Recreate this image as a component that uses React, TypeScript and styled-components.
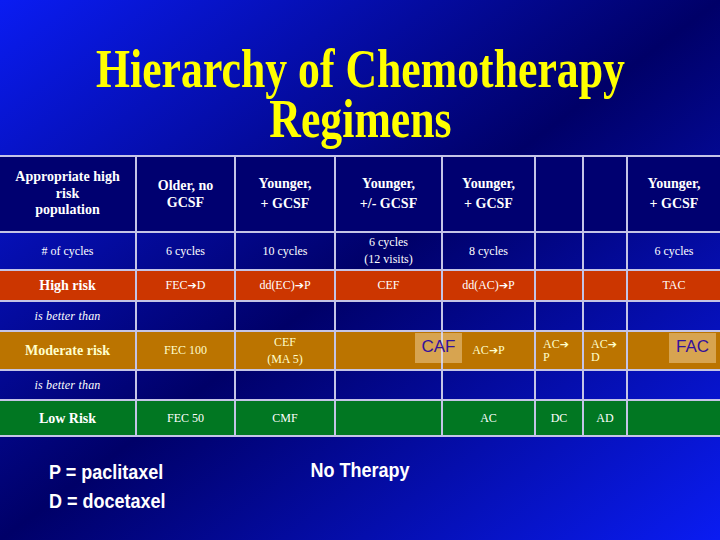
import React from "react";
import styled, { createGlobalStyle, css } from "styled-components";

const GlobalStyle = createGlobalStyle`
  html, body { margin: 0; padding: 0; background: #000068; }
  #root { width: 720px; height: 540px; }
`;

const Slide = styled.div`
  width: 720px;
  height: 540px;
  overflow: hidden;
  display: flex;
  flex-direction: column;
  background: linear-gradient(to bottom right, #0a1cf2 0%, #000068 50%, #0a1cf2 100%);
  font-family: "Liberation Serif", "Times New Roman", serif;
`;

const Title = styled.h1`
  margin: 0;
  padding-top: 44px;
  height: 100px;
  display: flex;
  flex-direction: column;
  align-items: center;
  font-family: "Liberation Serif", "Times New Roman", serif;
  font-weight: bold;
  font-size: 54px;
  color: #ffff00;
`;

const TitleLine = styled.span`
  display: block;
  height: 50px;
  line-height: 50px;
  transform: scaleX(0.81);
  white-space: nowrap;
`;

const Grid = styled.table`
  margin-top: 11px;
  margin-left: -2px;
  width: 722px;
  border-collapse: collapse;
  table-layout: fixed;
`;

const Col = styled.col<{ $w: number }>`
  width: ${(p) => p.$w}px;
`;

type Tone = "header" | "clear" | "red" | "orange" | "green";

const toneFill: Record<Tone, string> = {
  header: "#000070",
  clear: "transparent",
  red: "#cc3600",
  orange: "#bb7400",
  green: "#017722",
};

const Row = styled.tr<{ $tone: Tone; $h: number }>`
  height: ${(p) => p.$h}px;
  background: ${(p) => toneFill[p.$tone]};
  color: ${(p) => (p.$tone === "orange" ? "#ffffcc" : "#ffffff")};
`;

const Cell = styled.td<{ $kind?: "head" | "label" | "note" | "data"; $lh?: number; $left?: boolean }>`
  position: relative;
  border: 2px solid #c4c4e6;
  padding: 0 6px;
  vertical-align: middle;
  text-align: ${(p) => (p.$left ? "left" : "center")};
  font-size: 12px;
  line-height: ${(p) => p.$lh ?? 17}px;
  overflow: visible;
  ${(p) =>
    p.$kind === "head" &&
    css`
      font-size: 14px;
      font-weight: bold;
    `}
  ${(p) =>
    p.$kind === "label" &&
    css`
      font-size: 14px;
      font-weight: bold;
    `}
  ${(p) =>
    p.$kind === "note" &&
    css`
      font-style: italic;
      letter-spacing: 0.2px;
    `}
  ${(p) =>
    p.$left &&
    css`
      padding-left: 7px;
    `}
`;

const Arrow = styled.span`
  font-family: "DejaVu Sans", sans-serif;
  font-size: 11px;
  font-weight: bold;
`;

const Badge = styled.span<{ $right: number }>`
  position: absolute;
  top: 1px;
  right: ${(p) => p.$right}px;
  width: 47px;
  height: 30px;
  display: flex;
  align-items: center;
  justify-content: center;
  background: rgba(255, 232, 190, 0.42);
  color: #33119a;
  font-family: "Liberation Sans", Arial, sans-serif;
  font-size: 17px;
  line-height: 1;
  padding-bottom: 4px;
  box-sizing: border-box;
`;

const Footer = styled.div`
  flex: 1;
  display: grid;
  grid-template-columns: 1fr auto 1fr;
  font-family: "Liberation Sans", Arial, sans-serif;
  font-weight: bold;
  color: #ffffff;
`;

const Legend = styled.div`
  padding-top: 23px;
  padding-left: 49px;
  display: flex;
  flex-direction: column;
  gap: 5px;
`;

const Line = styled.div`
  font-size: 20px;
  line-height: 24px;
  transform: scaleX(0.9);
  transform-origin: 0 50%;
  white-space: nowrap;
`;

const Center = styled.div`
  padding-top: 21px;
  font-size: 20px;
  line-height: 24px;
  transform: scaleX(0.9);
  white-space: nowrap;
`;

const A = () => <Arrow>➔</Arrow>;

const widths = [137, 99, 100, 107, 93, 48, 44, 94];

export default function App() {
  return (
    <Slide>
      <GlobalStyle />
      <Title>
        <TitleLine>Hierarchy of Chemotherapy</TitleLine>
        <TitleLine>Regimens</TitleLine>
      </Title>
      <Grid>
        <colgroup>
          {widths.map((w, i) => (
            <Col key={i} $w={w} />
          ))}
        </colgroup>
        <tbody>
          <Row $tone="header" $h={76}>
            <Cell $kind="head" $lh={16.5}>
              Appropriate high
              <br />
              risk
              <br />
              population
            </Cell>
            <Cell $kind="head" $lh={17}>
              Older, no
              <br />
              GCSF
            </Cell>
            <Cell $kind="head" $lh={20}>
              Younger,
              <br />+ GCSF
            </Cell>
            <Cell $kind="head" $lh={20}>
              Younger,
              <br />
              +/- GCSF
            </Cell>
            <Cell $kind="head" $lh={20}>
              Younger,
              <br />+ GCSF
            </Cell>
            <Cell />
            <Cell />
            <Cell $kind="head" $lh={20}>
              Younger,
              <br />+ GCSF
            </Cell>
          </Row>
          <Row $tone="clear" $h={38}>
            <Cell># of cycles</Cell>
            <Cell>6 cycles</Cell>
            <Cell>10 cycles</Cell>
            <Cell>
              6 cycles
              <br />
              (12 visits)
            </Cell>
            <Cell>8 cycles</Cell>
            <Cell />
            <Cell />
            <Cell>6 cycles</Cell>
          </Row>
          <Row $tone="red" $h={31}>
            <Cell $kind="label">High risk</Cell>
            <Cell>
              FEC<A />D
            </Cell>
            <Cell>
              dd(EC)<A />P
            </Cell>
            <Cell>CEF</Cell>
            <Cell>
              dd(AC)<A />P
            </Cell>
            <Cell />
            <Cell />
            <Cell>TAC</Cell>
          </Row>
          <Row $tone="clear" $h={30}>
            <Cell $kind="note">is better than</Cell>
            <Cell />
            <Cell />
            <Cell />
            <Cell />
            <Cell />
            <Cell />
            <Cell />
          </Row>
          <Row $tone="orange" $h={39}>
            <Cell $kind="label">Moderate risk</Cell>
            <Cell>FEC 100</Cell>
            <Cell>
              CEF
              <br />
              (MA 5)
            </Cell>
            <Cell>
              <Badge $right={-21}>CAF</Badge>
            </Cell>
            <Cell>
              AC<A />P
            </Cell>
            <Cell $left $lh={13}>
              AC<A />
              <br />P
            </Cell>
            <Cell $left $lh={13}>
              AC<A />
              <br />D
            </Cell>
            <Cell>
              <Badge $right={4}>FAC</Badge>
            </Cell>
          </Row>
          <Row $tone="clear" $h={30}>
            <Cell $kind="note">is better than</Cell>
            <Cell />
            <Cell />
            <Cell />
            <Cell />
            <Cell />
            <Cell />
            <Cell />
          </Row>
          <Row $tone="green" $h={36}>
            <Cell $kind="label">Low Risk</Cell>
            <Cell>FEC 50</Cell>
            <Cell>CMF</Cell>
            <Cell />
            <Cell>AC</Cell>
            <Cell>DC</Cell>
            <Cell>AD</Cell>
            <Cell />
          </Row>
        </tbody>
      </Grid>
      <Footer>
        <Legend>
          <Line>P = paclitaxel</Line>
          <Line>D = docetaxel</Line>
        </Legend>
        <Center>No Therapy</Center>
        <div />
      </Footer>
    </Slide>
  );
}
